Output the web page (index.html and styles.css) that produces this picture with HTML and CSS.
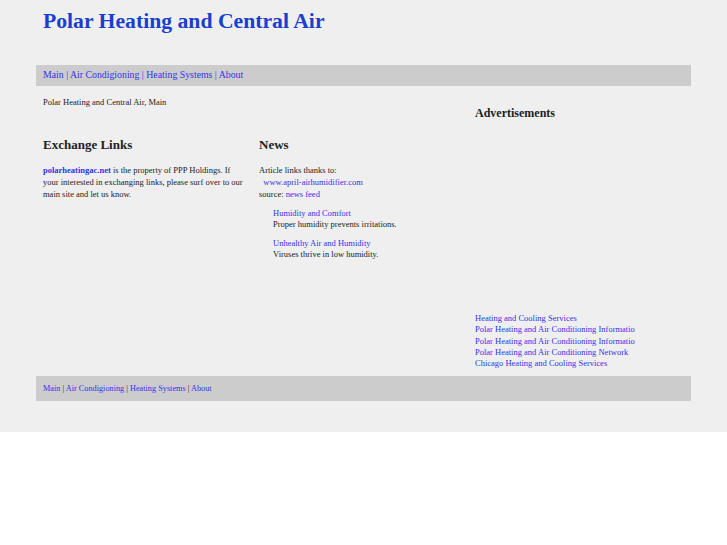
FILE: index.html
```html
<!DOCTYPE html>
<html>
<head>
<meta charset="utf-8">
<link rel="stylesheet" href="styles.css">
</head>
<body>
<div class="page">
  <div class="wrap">
    <div class="header"><h1 class="title">Polar Heating and Central Air</h1></div>
    <div class="nav">
      <a href="#">Main</a> | <a href="#">Air Condigioning</a> | <a href="#">Heating Systems</a> | <a href="#">About</a>
    </div>
    <div class="content">
      <div class="main">
        <div class="crumb">Polar Heating and Central Air, Main</div>
        <div class="cols">
          <div class="col">
            <h2 class="heading">Exchange Links</h2>
            <p class="text narrow"><a href="#" class="bold">polarheatingac.net</a> is the property of PPP Holdings. If your interested in exchanging links, please surf over to our main site and let us know.</p>
          </div>
          <div class="col">
            <h2 class="heading">News</h2>
            <p class="text">Article links thanks to:<br>&nbsp;&nbsp;<a href="#">www.april-airhumidifier.com</a><br>source: <a href="#">news feed</a></p>
            <div class="item">
              <a href="#">Humidity and Comfort</a><br>Proper humidity prevents irritations.
            </div>
            <div class="item">
              <a href="#">Unhealthy Air and Humidity</a><br>Viruses thrive in low humidity.
            </div>
          </div>
        </div>
      </div>
      <div class="side">
        <h3 class="ads">Advertisements</h3>
        <div class="adlinks">
          <a href="#">Heating and Cooling Services</a><br>
          <a href="#">Polar Heating and Air Conditioning Informatio</a><br>
          <a href="#">Polar Heating and Air Conditioning Informatio</a><br>
          <a href="#">Polar Heating and Air Conditioning Network</a><br>
          <a href="#">Chicago Heating and Cooling Services</a>
        </div>
      </div>
    </div>
    <div class="footer">
      <a href="#">Main</a> | <a href="#">Air Condigioning</a> | <a href="#">Heating Systems</a> | <a href="#">About</a>
    </div>
  </div>
</div>
</body>
</html>
```
FILE: styles.css
```css
html, body {
  margin: 0;
  padding: 0;
  background: #ffffff;
}
body {
  font-family: "Liberation Serif", "Times New Roman", serif;
  color: #222222;
}
a {
  color: #3333ee;
  text-decoration: none;
}
.page {
  background: #efefef;
  height: 432px;
}
.wrap {
  margin-left: 36px;
  width: 655px;
}
.header {
  height: 65px;
  padding-left: 7px;
}
.title {
  margin: 0;
  padding-top: 8px;
  font-size: 21.7px;
  line-height: 26px;
  font-weight: bold;
  color: #1a3fcc;
}
.nav {
  background: #cccccc;
  height: 21px;
  line-height: 20px;
  padding-left: 7px;
  font-size: 9.8px;
  color: #3333ee;
}
.content {
  display: flex;
  height: 290px;
}
.main {
  width: 432px;
  padding-left: 7px;
}
.crumb {
  font-size: 8.5px;
  line-height: 12px;
  margin-top: 10px;
}
.cols {
  display: flex;
}
.col {
  width: 216px;
}
.heading {
  margin: 0;
  margin-top: 29px;
  font-size: 13px;
  line-height: 16px;
  font-weight: bold;
}
.text {
  margin: 11px 0 0;
  font-size: 8.5px;
  line-height: 12px;
}
.narrow {
  width: 203px;
}
.bold {
  font-weight: bold;
}
.item {
  margin: 8px 0 0 14px;
  font-size: 8.5px;
  line-height: 11px;
}
.side {
  flex: 1;
}
.ads {
  margin: 0;
  margin-top: 20px;
  font-size: 12px;
  line-height: 14px;
  font-weight: bold;
}
.adlinks {
  margin-top: 193px;
  font-size: 8.5px;
  line-height: 11.3px;
}
.footer {
  background: #cccccc;
  height: 25px;
  line-height: 26px;
  padding-left: 7px;
  font-size: 8.25px;
  color: #222222;
}
```
